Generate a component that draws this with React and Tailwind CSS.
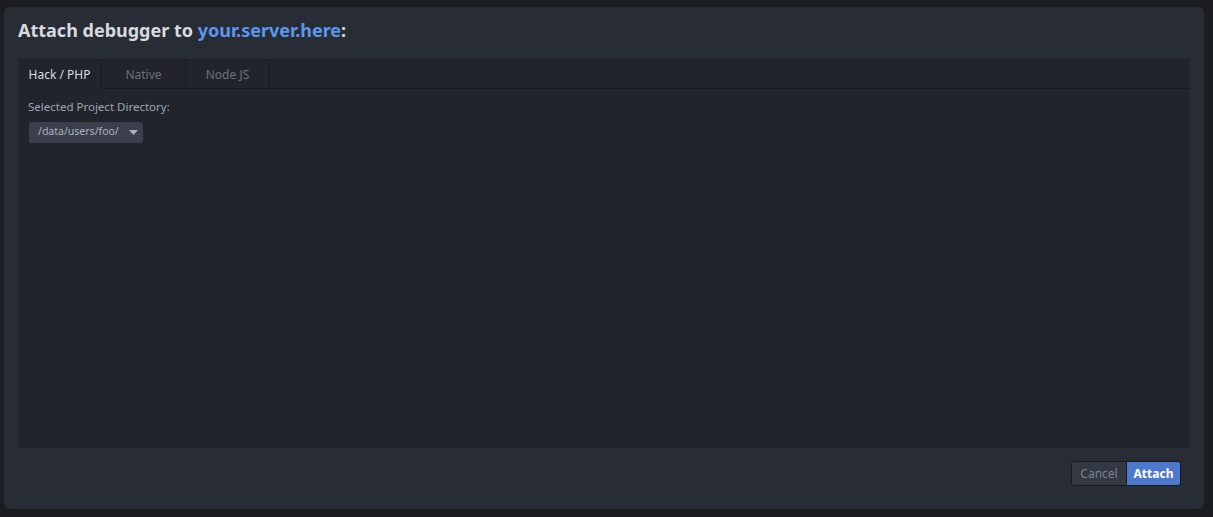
const tabs = ["Hack / PHP", "Native", "Node JS"];

const App = () => {
  return (
    <div
      className="min-h-screen w-full bg-[#1c1d21] pt-[7px] pl-[4px]"
      style={{ fontFamily: '"Noto Sans", "Open Sans", sans-serif' }}
    >
      {/* Dialog */}
      <div className="w-[1200px] h-[502px] rounded-[6px] bg-[#282c34] px-[14px] flex flex-col">
        {/* Title */}
        <div className="h-[52px] flex items-center pb-[6px]">
          <h1 className="text-[18px] font-bold text-[#d7dae0] leading-none">
            Attach debugger to <span className="text-[#5c96f0]">your.server.here</span>:
          </h1>
        </div>

        {/* Panel */}
        <div className="h-[389px] bg-[#21252b] flex flex-col">
          {/* Tabs */}
          <div className="flex h-[30px]">
            {tabs.map((t, i) => (
              <div
                key={t}
                className={
                  i === 0
                    ? "w-[84px] flex items-center justify-center pt-[2px] text-[12px] text-[#d7dae0] border-r border-[#181a1f]"
                    : "w-[84px] flex items-center justify-center pt-[2px] text-[12px] text-[#6b717d] border-r border-b border-[#181a1f]"
                }
              >
                {t}
              </div>
            ))}
            <div className="flex-1 border-b border-[#181a1f]" />
          </div>

          {/* Body */}
          <div className="pl-[10px] pt-[12px]">
            <p className="text-[11.5px] text-[#9da5b4] leading-none">Selected Project Directory:</p>
            <button className="mt-[9px] ml-[1px] h-[21px] w-[114px] rounded-[3px] bg-[#3a3f4b] flex items-center pl-[9px] gap-[10px] text-[10.5px] text-[#abb2bf]">
              <span>/data/users/foo/</span>
              <svg width="9" height="5" viewBox="0 0 9 5">
                <path d="M0 0h9L4.5 5z" fill="#abb2bf" />
              </svg>
            </button>
          </div>
        </div>

        {/* Footer */}
        <div className="flex justify-end pt-[13px] pr-[9px]">
          <div className="flex">
            <button className="h-[25px] w-[56px] rounded-l-[3px] bg-[#333842] border border-[#181a1f] text-[12px] text-[#7c828e]">
              Cancel
            </button>
            <button className="h-[25px] w-[54px] rounded-r-[3px] bg-[#4d78cc] border border-[#181a1f] border-l-0 text-[12px] font-bold text-white">
              Attach
            </button>
          </div>
        </div>
      </div>
    </div>
  );
};

export default App;
